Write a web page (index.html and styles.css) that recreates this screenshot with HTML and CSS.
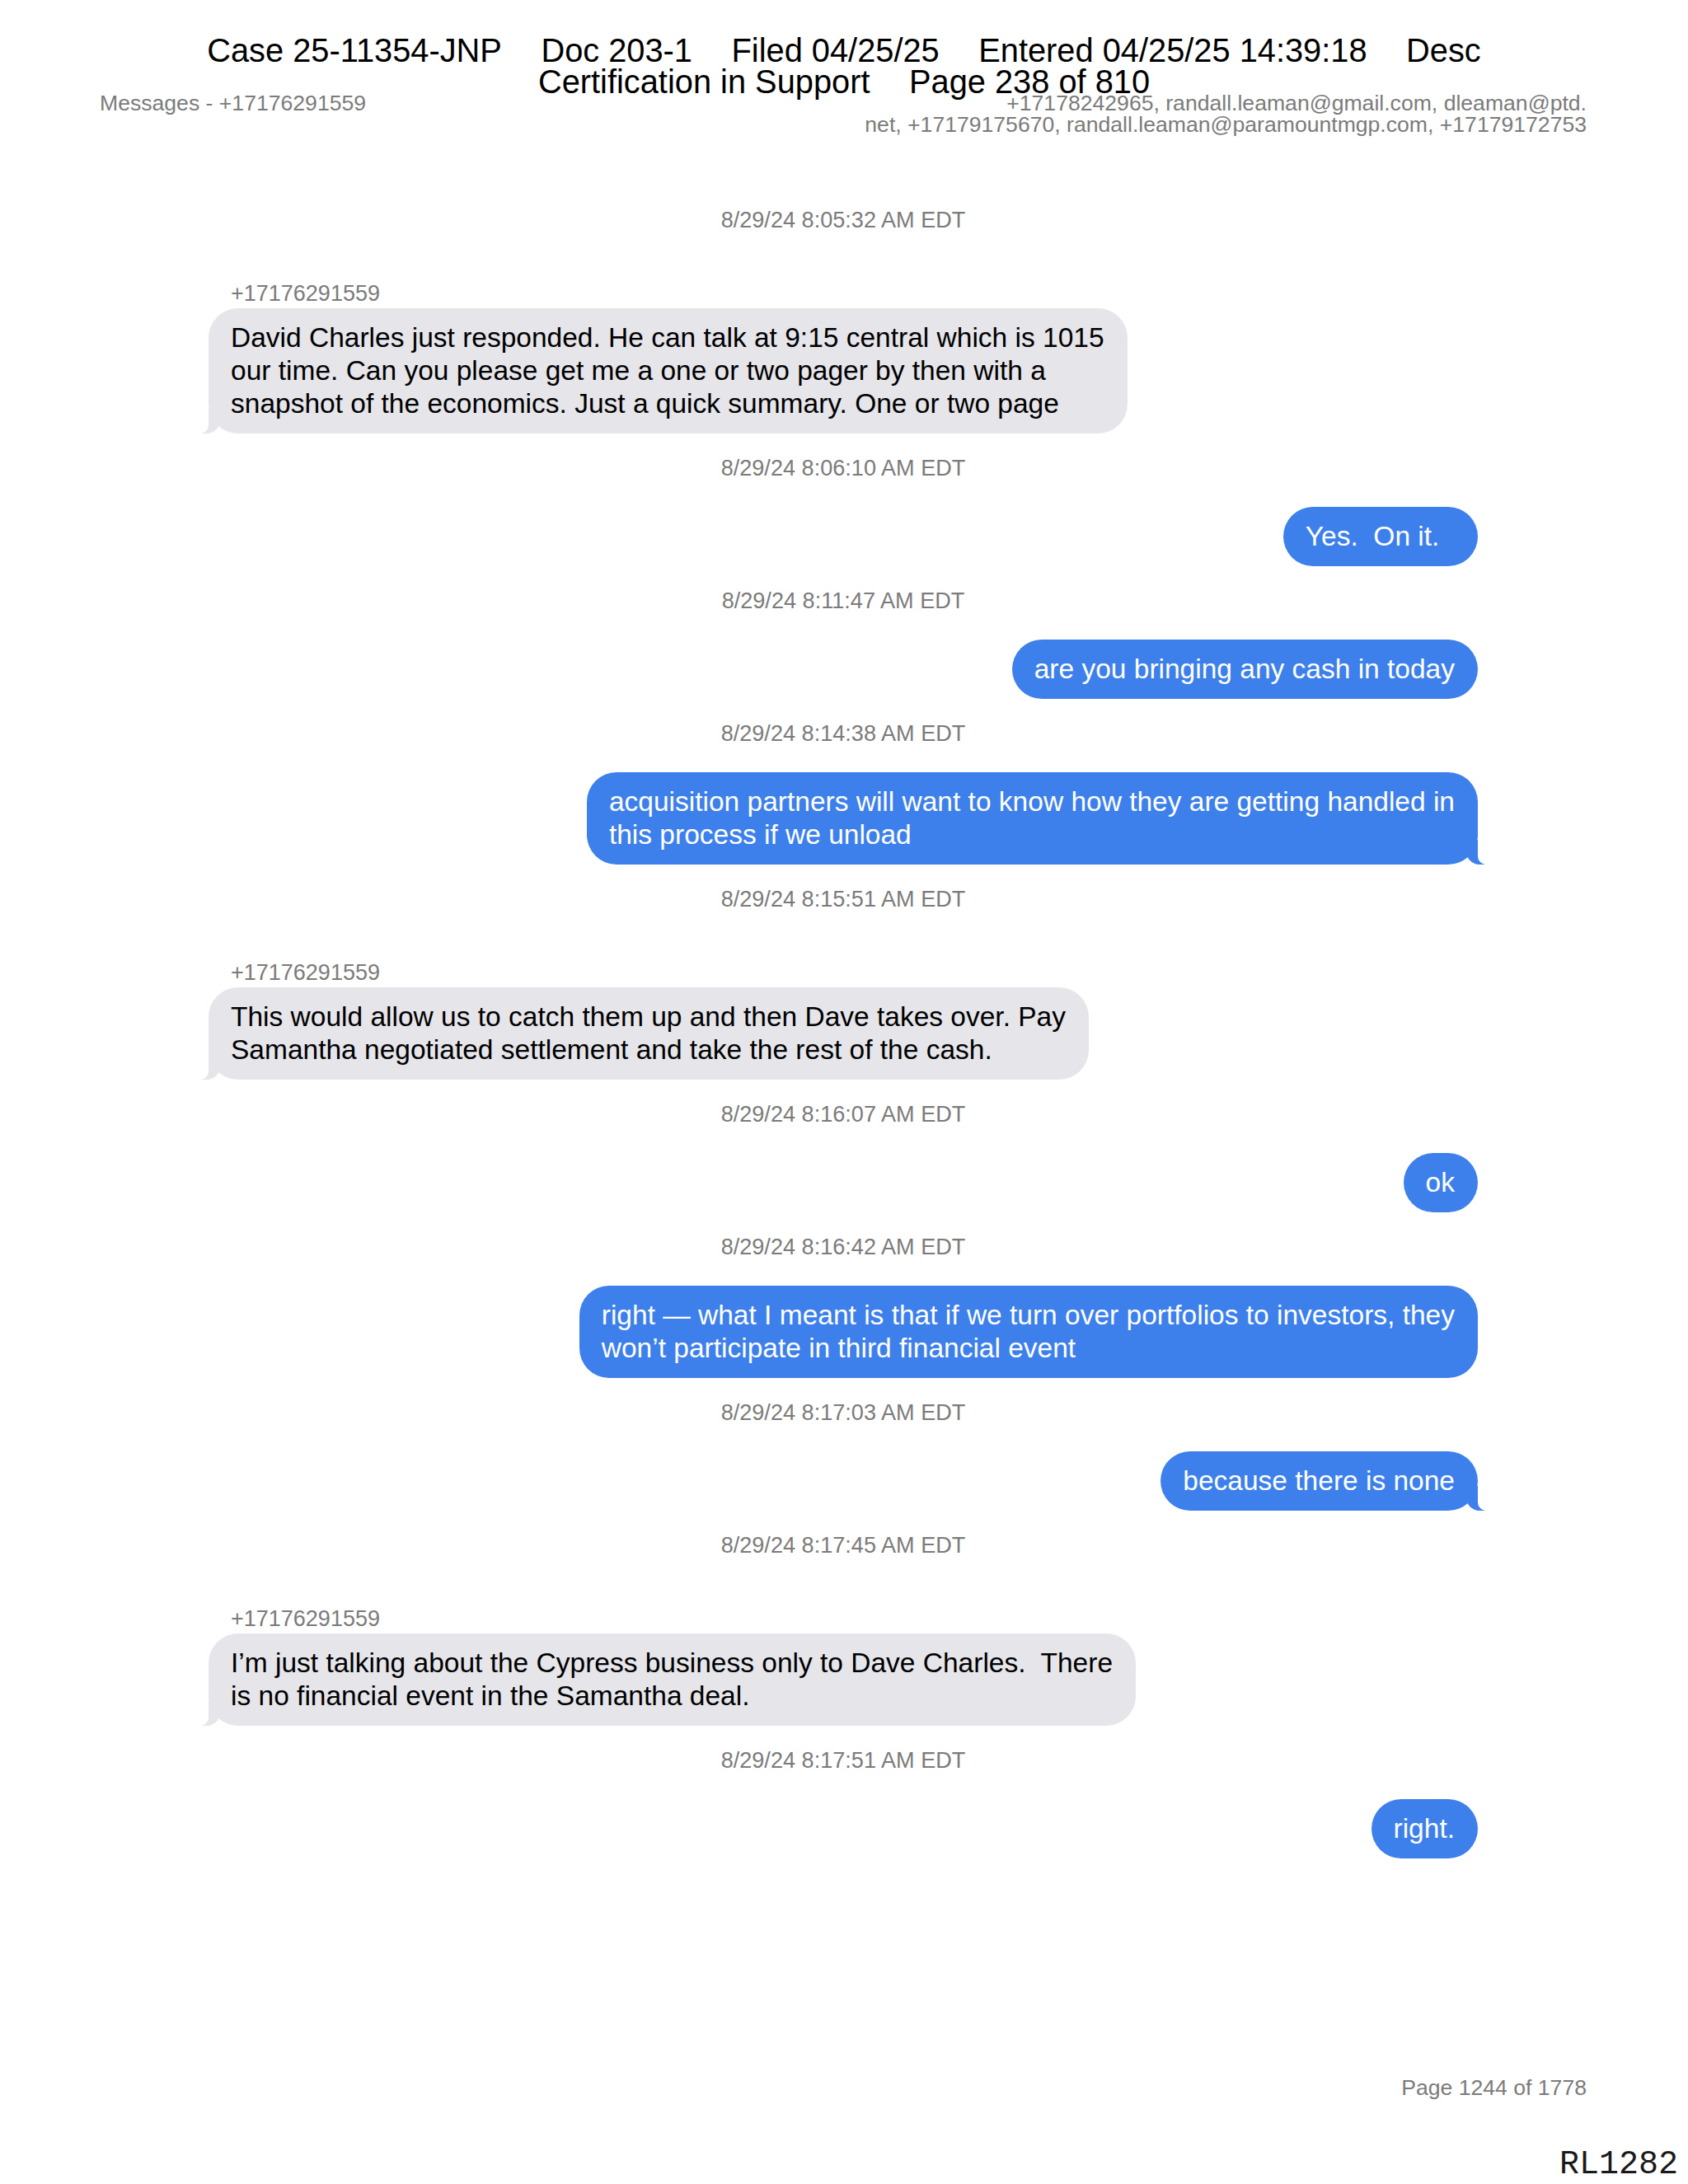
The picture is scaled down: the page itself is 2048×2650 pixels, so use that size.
FILE: index.html
```html
<!DOCTYPE html>
<html lang="en">
<head>
<meta charset="utf-8">
<title>Messages - +17176291559</title>
<link rel="stylesheet" href="styles.css">
</head>
<body>
<div class="page">
  <div class="stamp">
    <div class="stamp-line"><span>Case 25-11354-JNP</span><span>Doc 203-1</span><span>Filed 04/25/25</span><span>Entered 04/25/25 14:39:18</span><span>Desc</span></div>
    <div class="stamp-line"><span>Certification in Support</span><span>Page 238 of 810</span></div>
  </div>

  <header class="doc-head">
    <div class="doc-title">Messages - +17176291559</div>
    <div class="doc-people">+17178242965, randall.leaman@gmail.com, dleaman@ptd.<br>net, +17179175670, randall.leaman@paramountmgp.com, +17179172753</div>
  </header>

  <main class="thread">
    <div class="ts first">8/29/24 8:05:32 AM EDT</div>
    <div class="sender">+17176291559</div>
    <div class="bubble recv tail">David Charles just responded. He can talk at 9:15 central which is 1015<br>our time. Can you please get me a one or two pager by then with a<br>snapshot of the economics. Just a quick summary. One or two page</div>

    <div class="ts">8/29/24 8:06:10 AM EDT</div>
    <div class="bubble sent">Yes.&nbsp; On it.&nbsp;&nbsp;</div>

    <div class="ts">8/29/24 8:11:47 AM EDT</div>
    <div class="bubble sent">are you bringing any cash in today</div>

    <div class="ts">8/29/24 8:14:38 AM EDT</div>
    <div class="bubble sent tail">acquisition partners will want to know how they are getting handled in<br>this process if we unload</div>

    <div class="ts">8/29/24 8:15:51 AM EDT</div>
    <div class="sender">+17176291559</div>
    <div class="bubble recv tail">This would allow us to catch them up and then Dave takes over. Pay<br>Samantha negotiated settlement and take the rest of the cash.</div>

    <div class="ts">8/29/24 8:16:07 AM EDT</div>
    <div class="bubble sent">ok</div>

    <div class="ts">8/29/24 8:16:42 AM EDT</div>
    <div class="bubble sent">right — what I meant is that if we turn over portfolios to investors, they<br>won’t participate in third financial event</div>

    <div class="ts">8/29/24 8:17:03 AM EDT</div>
    <div class="bubble sent tail">because there is none</div>

    <div class="ts">8/29/24 8:17:45 AM EDT</div>
    <div class="sender">+17176291559</div>
    <div class="bubble recv tail">I’m just talking about the Cypress business only to Dave Charles.&nbsp; There<br>is no financial event in the Samantha deal.</div>

    <div class="ts">8/29/24 8:17:51 AM EDT</div>
    <div class="bubble sent">right.</div>
  </main>

  <footer class="page-foot">Page 1244 of 1778</footer>

  <div class="bates">RL1282</div>
</div>
</body>
</html>
```

FILE: styles.css
```css
html, body {
  margin: 0;
  padding: 0;
  background: #ffffff;
}

.page {
  position: relative;
  width: 2048px;
  height: 2650px;
  box-sizing: border-box;
  padding: 112px 123px 0 121px;
  font-family: "Liberation Sans", Arial, sans-serif;
  color: #000000;
  overflow: hidden;
}

/* court filing stamp laid over the page */
.stamp {
  position: absolute;
  top: 42px;
  left: 0;
  right: 0;
  font-size: 39.8px;
  line-height: 38px;
  color: #000000;
}

.stamp-line {
  display: flex;
  justify-content: center;
  gap: 47.5px;
  white-space: nowrap;
}

/* messages export header */
.doc-head {
  display: flex;
  justify-content: space-between;
  align-items: flex-start;
  font-size: 26.6px;
  line-height: 26px;
  color: #7b7b7b;
}

.doc-people {
  text-align: right;
  white-space: nowrap;
}

/* conversation */
.thread {
  width: 1540px;
  margin: 87px auto 0;
  display: flex;
  flex-direction: column;
}

.ts {
  align-self: center;
  margin-top: 26px;
  font-size: 27.1px;
  line-height: 32px;
  color: #7b7b7b;
  white-space: nowrap;
}

.ts.first {
  margin-top: 0;
}

.sender {
  align-self: flex-start;
  margin-top: 57px;
  padding-left: 27px;
  font-size: 27px;
  line-height: 32px;
  color: #7b7b7b;
}

.bubble {
  position: relative;
  box-sizing: border-box;
  max-width: 1260px;
  padding: 16px 28px 16px 27px;
  border-radius: 36px;
  font-size: 33.5px;
  line-height: 40px;
  white-space: nowrap;
}

.recv {
  align-self: flex-start;
  margin-top: 2px;
  background: #e5e5ea;
  color: #000000;
}

.sent {
  align-self: flex-end;
  margin-top: 31px;
  background: #3d80eb;
  color: #ffffff;
}

/* bubble tails */
.tail::before,
.tail::after {
  content: "";
  position: absolute;
  bottom: 0;
  height: 30px;
}

.recv.tail::before {
  left: -8px;
  width: 22px;
  background: #e5e5ea;
  border-bottom-right-radius: 16px;
}

.recv.tail::after {
  left: -12px;
  width: 12px;
  background: #ffffff;
  border-bottom-right-radius: 10px;
}

.sent.tail::before {
  right: -8px;
  width: 22px;
  background: #3d80eb;
  border-bottom-left-radius: 16px;
}

.sent.tail::after {
  right: -12px;
  width: 12px;
  background: #ffffff;
  border-bottom-left-radius: 10px;
}

.page-foot {
  margin-top: 262px;
  text-align: right;
  font-size: 26.6px;
  line-height: 32px;
  color: #7b7b7b;
}

.bates {
  position: absolute;
  top: 2607px;
  right: 12px;
  font-family: "Liberation Mono", "Courier New", monospace;
  font-size: 40px;
  line-height: 40px;
  color: #1a1a1a;
}
```
